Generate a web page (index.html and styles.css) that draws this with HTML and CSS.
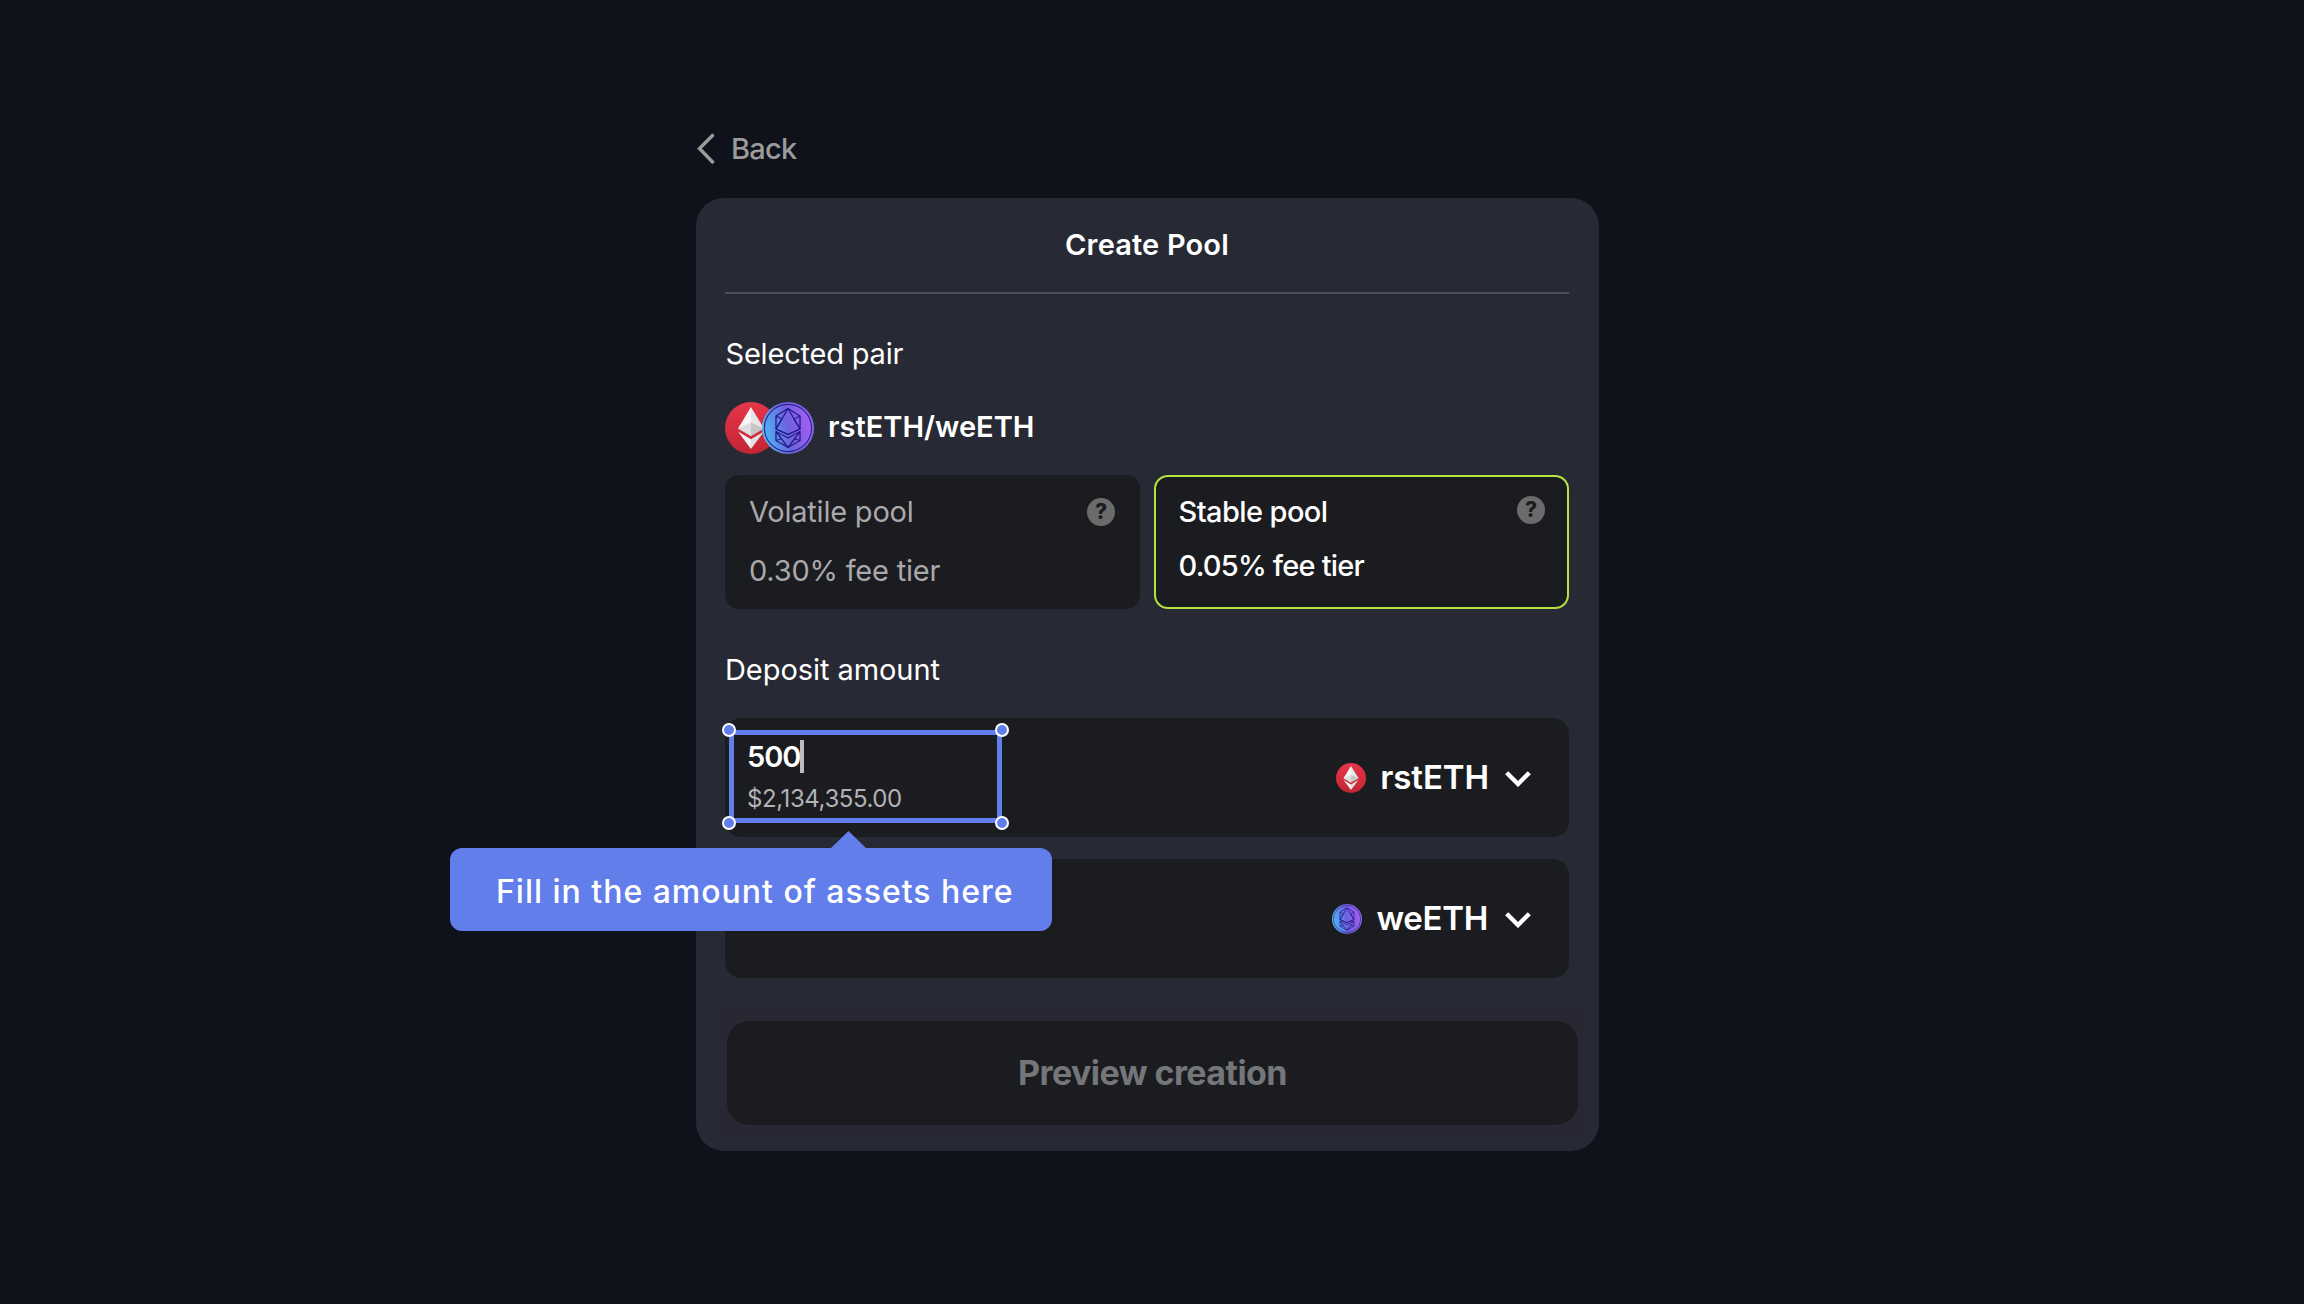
FILE: index.html
```html
<!DOCTYPE html>
<html lang="en">
<head>
<meta charset="utf-8">
<title>Create Pool</title>
<link rel="stylesheet" href="styles.css">
</head>
<body>
<svg class="defs" width="0" height="0" aria-hidden="true">
  <defs>
    <linearGradient id="red" x1="0" y1="0" x2="0" y2="1"><stop offset="0" stop-color="#e63649"/><stop offset="1" stop-color="#c22534"/></linearGradient>
    <linearGradient id="violet" x1="0" y1="0.6" x2="1" y2="0.4"><stop offset="0" stop-color="#4cb4f4"/><stop offset="0.5" stop-color="#6f62de"/><stop offset="1" stop-color="#a75ef2"/></linearGradient>
    <linearGradient id="rim" x1="0" y1="0.6" x2="1" y2="0.4"><stop offset="0" stop-color="#58bdf3"/><stop offset="0.5" stop-color="#6a5cd6"/><stop offset="1" stop-color="#8b6cf0"/></linearGradient>
    <symbol id="rsteth" viewBox="0 0 52 52">
      <circle cx="26" cy="26" r="26" fill="url(#red)"/>
      <path d="M26 5 13 26.500 26 32z" fill="#f6f6f6"/>
      <path d="M26 5 39 26.500 26 32z" fill="#e6e6e6"/>
      <path d="M26 20.500 13 26.500 26 34.300z" fill="#dedede"/>
      <path d="M26 20.500 39 26.500 26 34.300z" fill="#c6c6c6"/>
      <path d="M13 29.500 26 37.200V47z" fill="#f3f3f3"/>
      <path d="M39 29.500 26 37.200V47z" fill="#e0e0e0"/>
    </symbol>
    <symbol id="weeth" viewBox="0 0 52 52">
      <circle cx="26" cy="26" r="26" fill="url(#rim)"/>
      <circle cx="26" cy="26" r="23.600" fill="url(#violet)" stroke="#2e2596" stroke-width="1.200"/>
      <g fill="none" stroke="#251a8c" stroke-width="1.300" stroke-linejoin="round">
        <path d="M26 6.500 14 14v13L26 32.500l12-5.500V14z"/>
        <path d="M26 6.500 14 27 26 32.500 38 27z"/>
        <path d="M14 14 20 17 14 27M38 14 32 17 38 27"/>
        <path d="M14 29.500 26 36 38 29.500V38.500L26 45.500 14 38.500z"/>
        <path d="M14 29.500 26 45.500 38 29.500M14 38.500 20 36.500M38 38.500 32 36.500"/>
      </g>
    </symbol>
    <symbol id="chevron" viewBox="0 0 26 16"><path d="M1.700 1.700 13 13 24.300 1.700" fill="none" stroke="#fff" stroke-width="4.400"/></symbol>
  </defs>
</svg>

<main class="page">
  <a class="back">
    <svg class="back-icon" viewBox="0 0 18 32"><path d="M16.500 1.500 2.500 15.500 16.500 30" fill="none" stroke="#9b9b9b" stroke-width="3.400"/></svg>
    <span>Back</span>
  </a>

  <section class="card">
    <h1 class="title">Create Pool</h1>

    <h2 class="label label-pair">Selected pair</h2>
    <div class="pair">
      <svg class="coin"><use href="#rsteth"/></svg>
      <svg class="coin coin-over"><use href="#weeth"/></svg>
      <span class="pair-name">rstETH/weETH</span>
    </div>

    <div class="pools">
      <div class="pool">
        <div class="pool-head"><span>Volatile pool</span><span class="help">?</span></div>
        <div class="fee">0.30% fee tier</div>
      </div>
      <div class="pool pool-active">
        <div class="pool-head"><span>Stable pool</span><span class="help">?</span></div>
        <div class="fee">0.05% fee tier</div>
      </div>
    </div>

    <h2 class="label label-deposit">Deposit amount</h2>
    <div class="deposits">
      <div class="deposit deposit-focus">
        <div class="amounts">
          <div class="amount">500<span class="caret"></span></div>
          <div class="usd">$2,134,355.00</div>
        </div>
        <div class="token"><svg class="token-icon"><use href="#rsteth"/></svg><span class="token-name">rstETH</span><svg class="chevron"><use href="#chevron"/></svg></div>
        <div class="highlight"><i class="handle tl"></i><i class="handle tr"></i><i class="handle bl"></i><i class="handle br"></i></div>
        <div class="tooltip">Fill in the amount of assets here</div>
      </div>
      <div class="deposit">
        <div class="token"><svg class="token-icon"><use href="#weeth"/></svg><span class="token-name token-we">weETH</span><svg class="chevron"><use href="#chevron"/></svg></div>
      </div>
    </div>

    <div class="footer"><button class="preview">Preview creation</button></div>
  </section>
</main>
</body>
</html>
```
FILE: styles.css
```css
* { box-sizing: border-box; }
body {
  margin: 0;
  min-height: 1304px;
  background: #0f111b;
  color: #fff;
  font: 400 29px/36px Inter, "Liberation Sans", sans-serif;
}
h1, h2 { margin: 0; font-size: inherit; }
.defs { position: absolute; }
.page { width: 903px; margin-left: 696px; padding-top: 131px; }

.back {
  display: flex;
  align-items: center;
  gap: 16px;
  height: 36px;
  margin-bottom: 31px;
  padding-left: 1px;
  color: #9b9b9b;
  font-weight: 500;
  letter-spacing: -0.75px;
}
.back-icon { width: 18px; height: 32px; }

.card {
  height: 953px;
  padding: 0 30px 0 29px;
  border-radius: 28px;
  background: #272934;
}
.title {
  height: 96px;
  border-bottom: 2px solid #4b4d58;
  font-weight: 600;
  line-height: 94px;
  letter-spacing: 0.15px;
  text-align: center;
}
.label { font-weight: 400; }
.label-pair { margin-top: 42px; padding-left: 0.5px; letter-spacing: -0.2px; }
.label-deposit { margin-top: 43px; letter-spacing: -0.06px; }

.pair { display: flex; align-items: center; height: 52px; margin-top: 30px; }
.coin { width: 52px; height: 52px; }
.coin-over { margin-left: -15px; }
.pair-name { margin-left: 14px; padding-bottom: 2px; font-weight: 600; }

.pools { display: grid; grid-template-columns: 1fr 1fr; gap: 14px; margin-top: 21px; }
.pool {
  height: 134px;
  padding: 19px 25px 0 24px;
  border-radius: 14px;
  background: #1b1c20;
  color: #a9a9ab;
  letter-spacing: -0.22px;
}
.pool-head { display: flex; justify-content: space-between; align-items: center; height: 36px; }
.fee { margin-top: 23px; }
.help {
  width: 28px;
  height: 28px;
  border-radius: 50%;
  background: #6b6b6b;
  color: #1b1c20;
  font-size: 21px;
  font-weight: 800;
  line-height: 28px;
  letter-spacing: 0;
  text-align: center;
}
.pool-active {
  padding: 17px 22px 0 22.5px;
  border: 2px solid #b5e33f;
  color: #fff;
  font-weight: 500;
  letter-spacing: -0.59px;
}
.pool-active .help { margin-top: -4px; }
.pool-active .fee { margin-top: 18px; letter-spacing: -0.8px; }

.deposits { display: grid; gap: 22px; margin-top: 30px; }
.deposit {
  position: relative;
  display: flex;
  align-items: center;
  height: 119px;
  padding: 0 38px 0 22px;
  border-radius: 16px;
  background: #1b1c20;
}
.deposit-focus { z-index: 1; }
.amounts { align-self: flex-start; padding-top: 21px; }
.amount { display: flex; height: 36px; font-weight: 600; letter-spacing: -1.1px; }
.caret { width: 4px; height: 33px; margin-top: 1px; background: #bdbdbf; }
.usd { margin-top: 10px; color: #b2b2b5; font-size: 24px; line-height: 28px; letter-spacing: -0.43px; }

.token { display: flex; align-items: center; margin-left: auto; }
.token-icon { width: 30px; height: 30px; }
.token-name { margin: 0 16px 0 14px; padding-bottom: 1px; font-size: 33px; font-weight: 600; letter-spacing: -0.1px; }
.token-we { margin-right: 17px; letter-spacing: -0.3px; }
.chevron { width: 26px; height: 16px; margin-top: 2px; }

.highlight {
  position: absolute;
  left: 4px;
  top: 12px;
  width: 273px;
  height: 93px;
  border: 5px solid #627eea;
}
.handle {
  position: absolute;
  width: 14px;
  height: 14px;
  border: 2px solid #fff;
  border-radius: 50%;
  background: #627eea;
}
.tl { left: -12px; top: -12px; }
.tr { right: -12px; top: -12px; }
.bl { left: -12px; bottom: -12px; }
.br { right: -12px; bottom: -12px; }

.tooltip {
  position: absolute;
  left: -275px;
  top: 130px;
  width: 602px;
  height: 83px;
  padding-left: 46px;
  border-radius: 12px;
  background: #627eea;
  font-size: 32px;
  font-weight: 500;
  line-height: 88px;
  letter-spacing: 0.98px;
  white-space: nowrap;
}
.tooltip::before {
  content: "";
  position: absolute;
  left: 380px;
  top: -17px;
  width: 37px;
  height: 18px;
  background: #627eea;
  clip-path: polygon(50% 0, 100% 100%, 0 100%);
}

.footer {
  width: 874px;
  margin: 25px 0 0 -10px;
  padding: 18px 11px 11px 12px;
  background: #282834;
}
.preview {
  display: block;
  width: 100%;
  height: 104px;
  padding: 0;
  border: 0;
  border-radius: 22px;
  background: #1b1c20;
  color: #75767a;
  font: 700 34px/42px Inter, "Liberation Sans", sans-serif;
  letter-spacing: -0.58px;
}
```
